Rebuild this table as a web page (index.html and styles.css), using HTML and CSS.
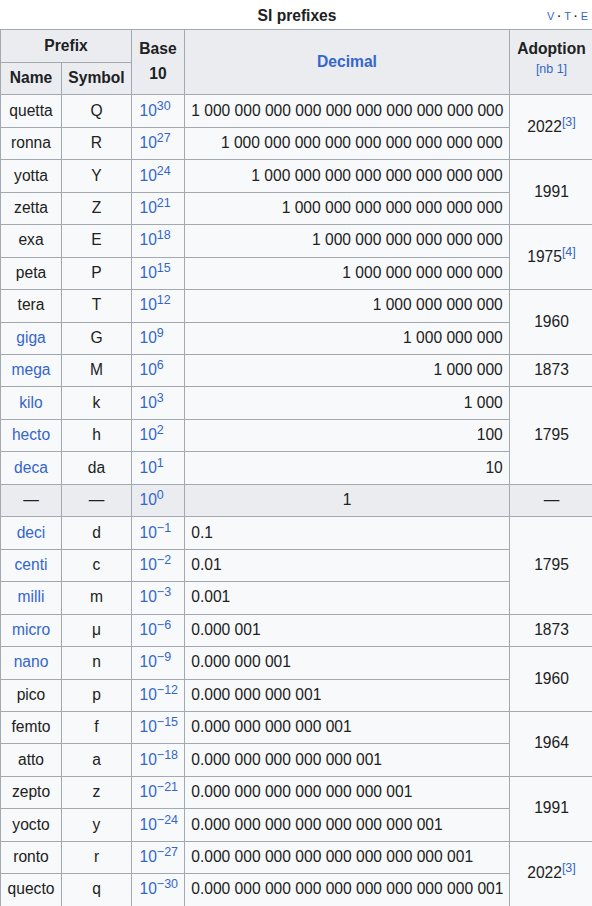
FILE: index.html
```html
<!DOCTYPE html>
<html lang="en">
<head>
<meta charset="utf-8">
<title>SI prefixes</title>
<link rel="stylesheet" href="styles.css">
</head>
<body>
<table class="wikitable">
  <caption>
    <div class="cap">
      <span></span>
      <span class="cap-title">SI prefixes</span>
      <span class="navbar"><a>V</a> · <a>T</a> · <a>E</a></span>
    </div>
  </caption>
  <colgroup>
    <col class="c-name">
    <col class="c-sym">
    <col class="c-base">
    <col class="c-dec">
    <col class="c-adopt">
  </colgroup>
  <thead>
    <tr>
      <th colspan="2">Prefix</th>
      <th rowspan="2">Base<br>10</th>
      <th rowspan="2"><a>Decimal</a></th>
      <th rowspan="2">Adoption<br><sup class="ref"><a>[nb 1]</a></sup></th>
    </tr>
    <tr>
      <th>Name</th>
      <th>Symbol</th>
    </tr>
  </thead>
  <tbody>
    <tr>
      <td class="ctr">quetta</td><td class="ctr">Q</td><td class="base"><a>10<sup>30</sup></a></td>
      <td class="r">1 000 000 000 000 000 000 000 000 000 000</td>
      <td class="ctr" rowspan="2">2022<sup class="ref"><a>[3]</a></sup></td>
    </tr>
    <tr>
      <td class="ctr">ronna</td><td class="ctr">R</td><td class="base"><a>10<sup>27</sup></a></td>
      <td class="r">1 000 000 000 000 000 000 000 000 000</td>
    </tr>
    <tr>
      <td class="ctr">yotta</td><td class="ctr">Y</td><td class="base"><a>10<sup>24</sup></a></td>
      <td class="r">1 000 000 000 000 000 000 000 000</td>
      <td class="ctr" rowspan="2">1991</td>
    </tr>
    <tr>
      <td class="ctr">zetta</td><td class="ctr">Z</td><td class="base"><a>10<sup>21</sup></a></td>
      <td class="r">1 000 000 000 000 000 000 000</td>
    </tr>
    <tr>
      <td class="ctr">exa</td><td class="ctr">E</td><td class="base"><a>10<sup>18</sup></a></td>
      <td class="r">1 000 000 000 000 000 000</td>
      <td class="ctr" rowspan="2">1975<sup class="ref"><a>[4]</a></sup></td>
    </tr>
    <tr>
      <td class="ctr">peta</td><td class="ctr">P</td><td class="base"><a>10<sup>15</sup></a></td>
      <td class="r">1 000 000 000 000 000</td>
    </tr>
    <tr>
      <td class="ctr">tera</td><td class="ctr">T</td><td class="base"><a>10<sup>12</sup></a></td>
      <td class="r">1 000 000 000 000</td>
      <td class="ctr" rowspan="2">1960</td>
    </tr>
    <tr>
      <td class="ctr"><a>giga</a></td><td class="ctr">G</td><td class="base"><a>10<sup>9</sup></a></td>
      <td class="r">1 000 000 000</td>
    </tr>
    <tr>
      <td class="ctr"><a>mega</a></td><td class="ctr">M</td><td class="base"><a>10<sup>6</sup></a></td>
      <td class="r">1 000 000</td>
      <td class="ctr">1873</td>
    </tr>
    <tr>
      <td class="ctr"><a>kilo</a></td><td class="ctr">k</td><td class="base"><a>10<sup>3</sup></a></td>
      <td class="r">1 000</td>
      <td class="ctr" rowspan="3">1795</td>
    </tr>
    <tr>
      <td class="ctr"><a>hecto</a></td><td class="ctr">h</td><td class="base"><a>10<sup>2</sup></a></td>
      <td class="r">100</td>
    </tr>
    <tr>
      <td class="ctr"><a>deca</a></td><td class="ctr">da</td><td class="base"><a>10<sup>1</sup></a></td>
      <td class="r">10</td>
    </tr>
    <tr class="unit">
      <td class="ctr">—</td><td class="ctr">—</td><td class="base"><a>10<sup>0</sup></a></td>
      <td class="ctr">1</td>
      <td class="ctr">—</td>
    </tr>
    <tr>
      <td class="ctr"><a>deci</a></td><td class="ctr">d</td><td class="base"><a>10<sup>−1</sup></a></td>
      <td>0.1</td>
      <td class="ctr" rowspan="3">1795</td>
    </tr>
    <tr>
      <td class="ctr"><a>centi</a></td><td class="ctr">c</td><td class="base"><a>10<sup>−2</sup></a></td>
      <td>0.01</td>
    </tr>
    <tr>
      <td class="ctr"><a>milli</a></td><td class="ctr">m</td><td class="base"><a>10<sup>−3</sup></a></td>
      <td>0.001</td>
    </tr>
    <tr>
      <td class="ctr"><a>micro</a></td><td class="ctr">μ</td><td class="base"><a>10<sup>−6</sup></a></td>
      <td>0.000 001</td>
      <td class="ctr">1873</td>
    </tr>
    <tr>
      <td class="ctr"><a>nano</a></td><td class="ctr">n</td><td class="base"><a>10<sup>−9</sup></a></td>
      <td>0.000 000 001</td>
      <td class="ctr" rowspan="2">1960</td>
    </tr>
    <tr>
      <td class="ctr">pico</td><td class="ctr">p</td><td class="base"><a>10<sup>−12</sup></a></td>
      <td>0.000 000 000 001</td>
    </tr>
    <tr>
      <td class="ctr">femto</td><td class="ctr">f</td><td class="base"><a>10<sup>−15</sup></a></td>
      <td>0.000 000 000 000 001</td>
      <td class="ctr" rowspan="2">1964</td>
    </tr>
    <tr>
      <td class="ctr">atto</td><td class="ctr">a</td><td class="base"><a>10<sup>−18</sup></a></td>
      <td>0.000 000 000 000 000 001</td>
    </tr>
    <tr>
      <td class="ctr">zepto</td><td class="ctr">z</td><td class="base"><a>10<sup>−21</sup></a></td>
      <td>0.000 000 000 000 000 000 001</td>
      <td class="ctr" rowspan="2">1991</td>
    </tr>
    <tr>
      <td class="ctr">yocto</td><td class="ctr">y</td><td class="base"><a>10<sup>−24</sup></a></td>
      <td>0.000 000 000 000 000 000 000 001</td>
    </tr>
    <tr>
      <td class="ctr">ronto</td><td class="ctr">r</td><td class="base"><a>10<sup>−27</sup></a></td>
      <td>0.000 000 000 000 000 000 000 000 001</td>
      <td class="ctr" rowspan="2">2022<sup class="ref"><a>[3]</a></sup></td>
    </tr>
    <tr>
      <td class="ctr">quecto</td><td class="ctr">q</td><td class="base"><a>10<sup>−30</sup></a></td>
      <td>0.000 000 000 000 000 000 000 000 000 001</td>
    </tr>
  </tbody>
</table>
</body>
</html>
```

FILE: styles.css
```css
html, body {
  margin: 0;
  padding: 0;
  background: #ffffff;
}

body {
  font-family: "Liberation Sans", Arial, sans-serif;
  color: #202122;
}

a {
  color: #3366cc;
  text-decoration: none;
}

.wikitable {
  border-collapse: collapse;
  table-layout: fixed;
  width: 593px;
  font-size: 15.6px;
  background: #f8f9fa;
  color: #202122;
  border: 1px solid #a2a9b1;
}

.c-name { width: 61px; }
.c-sym { width: 70px; }
.c-base { width: 53px; }
.c-dec { width: 325px; }
.c-adopt { width: 84px; }

caption {
  padding: 3.5px 0 1px;
  line-height: 24.96px;
}

.cap {
  display: grid;
  grid-template-columns: 1fr auto 1fr;
  align-items: center;
}

.cap-title {
  font-weight: bold;
}

.navbar {
  justify-self: end;
  font-size: 11px;
  padding-right: 6px;
  color: #202122;
  font-weight: bold;
}

.navbar a {
  font-weight: normal;
}

th, td {
  border: 1px solid #a2a9b1;
  padding: 3.25px 6.24px;
  line-height: 24.96px;
  white-space: nowrap;
}

th {
  background: #eaecf0;
  font-weight: bold;
  text-align: center;
}

td {
  text-align: left;
}

td.ctr {
  text-align: center;
}

td.r {
  text-align: right;
}

td.base {
  padding-left: 7.5px;
  padding-right: 2px;
}

tr.unit td {
  background: #eaecf0;
}

sup {
  font-size: 80%;
  line-height: 1;
  vertical-align: super;
}

sup.ref {
  font-weight: normal;
  font-size: 80%;
}
```
